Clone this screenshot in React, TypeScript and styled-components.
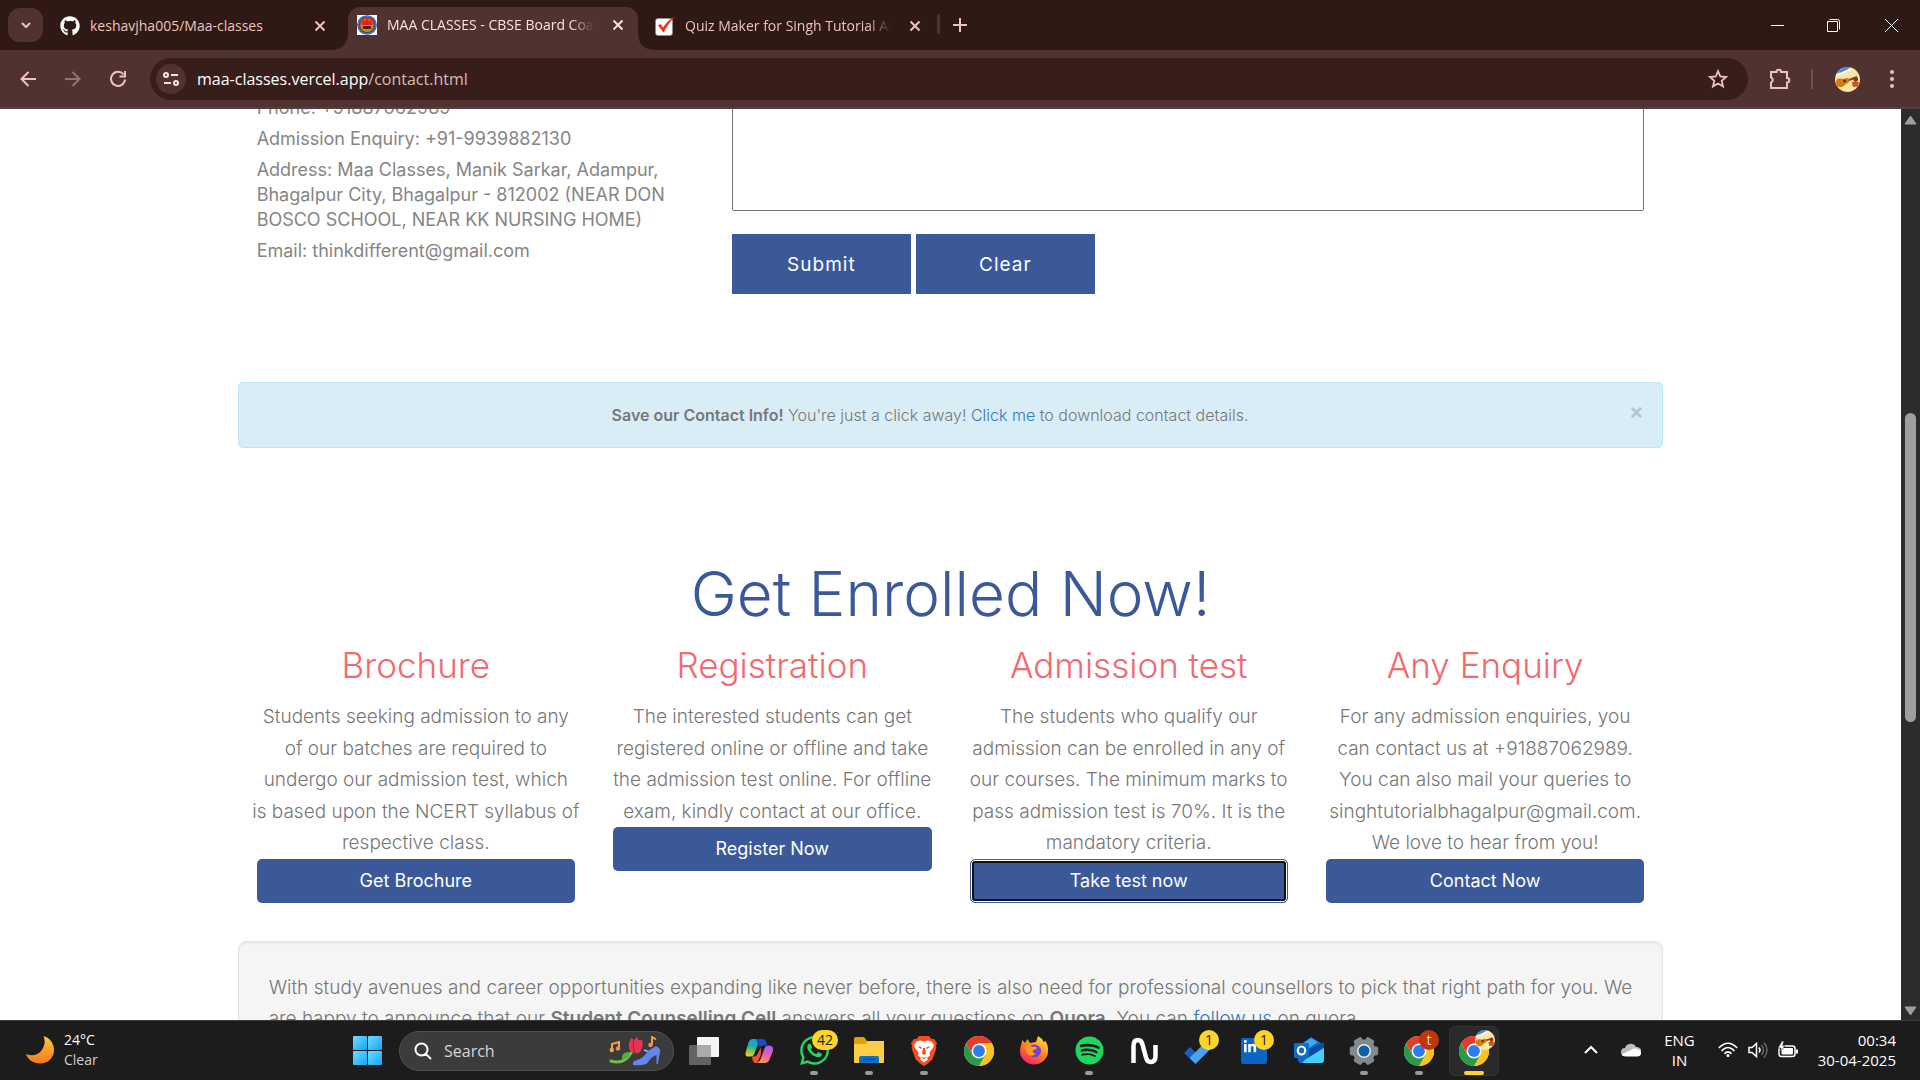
import React from "react";
import styled, { createGlobalStyle, css } from "styled-components";
import { FaGithub, FaLinkedinIn, FaWhatsapp, FaSpotify } from "react-icons/fa";

const ui = `"Open Sans", "Noto Sans", sans-serif`;
const body = `Inter, "Open Sans", sans-serif`;

const GlobalStyle = createGlobalStyle`
  *, *::before, *::after { box-sizing: border-box; }
  body { margin: 0; overflow: hidden; font-family: ${body}; }
  button, textarea, input { font: inherit; }
  button { border: 0; padding: 0; background: none; color: inherit; }
  h1, h2, p { margin: 0; }
`;

const Screen = styled.div`
  height: 100vh;
  display: flex;
  flex-direction: column;
  background: #fff;
`;

/* ---------- browser frame ---------- */

const TabStrip = styled.div`
  height: 50px;
  flex: none;
  display: flex;
  align-items: flex-end;
  background: #2f1914;
  color: #eec3be;
  font: 14px/20px ${ui};
`;

const TabSearch = styled.button`
  width: 35px;
  height: 34px;
  margin: 0 3px 8px 8px;
  border-radius: 12px;
  background: #503331;
  display: grid;
  place-items: center;
`;

const Tab = styled.div<{ $width: number; $after?: number; $active?: boolean }>`
  position: relative;
  width: ${(p) => p.$width}px;
  height: ${(p) => (p.$active ? 43 : 42)}px;
  margin-right: ${(p) => p.$after ?? 0}px;
  padding: ${(p) => (p.$active ? "0 10px 7px 9px" : "0 8px 7px 14px")};
  display: flex;
  align-items: center;
  gap: 10px;
  ${(p) =>
    p.$active &&
    css`
      background: #503331;
      color: #fbe0dc;
      border-radius: 12px 12px 0 0;
      &::before,
      &::after {
        content: "";
        position: absolute;
        bottom: 0;
        width: 14px;
        height: 14px;
      }
      &::before {
        right: 100%;
        background: radial-gradient(circle at 0 0, transparent 13px, #503331 14px);
      }
      &::after {
        left: 100%;
        background: radial-gradient(circle at 100% 0, transparent 13px, #503331 14px);
      }
    `}
`;

const TabTitle = styled.span<{ $fade?: boolean }>`
  flex: 1;
  min-width: 0;
  overflow: hidden;
  white-space: nowrap;
  ${(p) =>
    p.$fade &&
    css`
      mask-image: linear-gradient(to right, #000 calc(100% - 28px), transparent calc(100% - 4px));
    `}
`;

const IconButton = styled.button<{ $w?: number; $dim?: boolean }>`
  width: ${(p) => p.$w ?? 20}px;
  height: 24px;
  flex: none;
  display: grid;
  place-items: center;
  opacity: ${(p) => (p.$dim ? 0.45 : 1)};
`;

const StripDivider = styled.span`
  width: 3px;
  height: 20px;
  margin: 0 10px 16px 4px;
  border-radius: 2px;
  background: #503331;
`;

const NewTab = styled(IconButton)`
  margin-bottom: 13px;
`;

const WindowControls = styled.div`
  margin-left: auto;
  align-self: center;
  display: flex;
  color: #fff;
`;

const Toolbar = styled.div`
  height: 59px;
  flex: none;
  display: flex;
  align-items: center;
  padding: 0 5px;
  background: #503331;
  border-bottom: 2px solid #55403d;
  color: #eec3be;
`;

const Omnibox = styled.div`
  flex: 1;
  height: 42px;
  margin: 0 10px;
  padding: 0 20px 0 6px;
  display: flex;
  align-items: center;
  border-radius: 21px;
  background: #381e1b;
`;

const SiteInfo = styled.button`
  width: 30px;
  height: 30px;
  border-radius: 50%;
  background: #503331;
  display: grid;
  place-items: center;
  color: #fbe0dc;
`;

const Url = styled.span`
  flex: 1;
  padding-left: 11px;
  font: 16px/24px ${ui};
  color: #fff;
  span { color: #d3bcb8; }
`;

const ToolDivider = styled.span`
  width: 2px;
  height: 20px;
  margin: 0 20px 0 9px;
  background: #6f504d;
`;

const MenuButton = styled(IconButton)`
  margin-left: 8px;
`;

/* ---------- web page ---------- */

const Viewport = styled.div`
  flex: 1;
  min-height: 0;
  display: flex;
`;

const Page = styled.main`
  flex: 1;
  min-width: 0;
  overflow: hidden;
  color: #777;
  font-size: 19px;
  font-weight: 300;
`;

const Container = styled.div`
  width: 75%;
  margin: 0 auto;
`;

const ContactRow = styled.section`
  margin-top: -14px;
  display: grid;
  grid-template-columns: 1fr 2fr;
`;

const Col = styled.div`
  min-width: 0;
  padding: 0 19px;
`;

const ContactInfo = styled(Col)`
  display: flex;
  flex-direction: column;
  gap: 6px;
  font-size: 18px;
  font-weight: 400;
  line-height: 25px;
  color: #858585;
`;

const Message = styled.textarea`
  display: block;
  width: 100%;
  height: 116px;
  border: 1px solid #767676;
  border-radius: 2px;
  resize: none;
  background: #fff;
`;

const Actions = styled.div`
  margin-top: 23px;
  display: flex;
  gap: 5px;
`;

const FormButton = styled.button`
  width: 179px;
  height: 60px;
  background: #3b5998;
  color: #fff;
  font-size: 19px;
  font-weight: 400;
  letter-spacing: 1px;
`;

const Alert = styled.section`
  margin-top: 88px;
  height: 66px;
  padding: 0 14px 0 19px;
  display: flex;
  align-items: center;
  gap: 22px;
  border: 1px solid #bce8f1;
  border-radius: 5px;
  background: #d9edf7;
  font-size: 16px;
  p { flex: 1; text-align: center; }
  strong { font-weight: 600; }
`;

const AlertClose = styled.button`
  width: 24px;
  height: 24px;
  margin-bottom: 8px;
  color: #adc6d2;
  font-size: 22px;
  font-weight: 600;
  line-height: 24px;
`;

const Link = styled.a`
  color: #337ab7;
  text-decoration: none;
`;

const Title = styled.h1`
  margin-top: 113px;
  text-align: center;
  color: #3b5998;
  font: 300 62px/66px ${body};
`;

const Cards = styled.section`
  margin-top: 18px;
  display: grid;
  grid-template-columns: repeat(4, 1fr);
  align-items: start;
`;

const Card = styled(Col)`
  text-align: center;
  line-height: 1.66;
`;

const CardTitle = styled.h2`
  margin-bottom: 16px;
  color: #f16a70;
  font: 300 35px/40px ${body};
`;

const CardText = styled.p`
  margin: 0 -6px;
  white-space: pre-line;
`;

const CardLink = styled.a<{ $focused?: boolean }>`
  display: block;
  height: 44px;
  border-radius: 5px;
  background: #3b5998;
  color: #fff;
  font-size: 18px;
  font-weight: 400;
  line-height: 44px;
  text-decoration: none;
  ${(p) =>
    p.$focused &&
    css`
      border: 1px solid #3b5998;
      line-height: 42px;
      box-shadow: inset 0 0 0 1px #fff, inset 0 0 0 3px #101010;
    `}
`;

const Well = styled.section`
  margin-top: 38px;
  padding: 30px;
  border: 1px solid #e3e3e3;
  border-radius: 8px;
  background: #f5f5f5;
  box-shadow: inset 0 2px 2px rgba(0, 0, 0, 0.05);
  line-height: 1.66;
  text-align: justify;
  strong { font-weight: 600; }
`;

const ScrollBar = styled.div`
  width: 19px;
  flex: none;
  padding: 6px 0 4px;
  display: flex;
  flex-direction: column;
  align-items: center;
  background: #2c2c2c;
`;

const Track = styled.div`
  flex: 1;
  display: flex;
  flex-direction: column;
  align-items: center;
`;

const Space = styled.span<{ $grow: number }>`
  flex: ${(p) => p.$grow};
`;

const Thumb = styled.span`
  width: 11px;
  flex: 309;
  border-radius: 6px;
  background: #9f9f9f;
`;

/* ---------- taskbar ---------- */

const Taskbar = styled.footer`
  height: 60px;
  flex: none;
  display: grid;
  grid-template-columns: 353fr auto 421fr;
  align-items: center;
  border-top: 1px solid #3c3c3c;
  background: #1c1c1c;
  color: #fff;
  font: 14px/20px ${ui};
`;

const Weather = styled.div`
  padding: 0 0 2px 26px;
  display: flex;
  align-items: center;
  gap: 10px;
  p:last-child { color: #cfcfcf; }
`;

const Apps = styled.nav`
  display: flex;
  align-items: center;
  gap: 5px;
`;

const Start = styled.button`
  width: 29px;
  height: 29px;
  margin-right: 12px;
  display: grid;
  grid-template-columns: 14px 14px;
  gap: 1px;
  span { height: 14px; border-radius: 1px; background: linear-gradient(135deg, #6fdcff, #16a4fb); }
`;

const SearchBox = styled.label`
  width: 275px;
  height: 40px;
  padding: 0 12px 0 14px;
  display: flex;
  align-items: center;
  gap: 12px;
  border: 1px solid #505050;
  border-radius: 20px;
  background: #3b3b3b;
  input {
    flex: 1;
    min-width: 0;
    padding: 0;
    border: 0;
    outline: 0;
    background: none;
    color: #fff;
    font-size: 16px;
  }
  input::placeholder { color: #d6d6d6; opacity: 1; }
`;

const AppButton = styled.button<{ $active?: boolean; $running?: boolean }>`
  position: relative;
  width: 50px;
  height: 50px;
  border: 1px solid ${(p) => (p.$active ? "#333" : "transparent")};
  border-radius: 6px;
  background: ${(p) => (p.$active ? "#2a2a2a" : "none")};
  display: grid;
  place-items: center;
  &::after {
    content: "";
    display: ${(p) => (p.$active || p.$running ? "block" : "none")};
    position: absolute;
    left: 50%;
    bottom: 0;
    width: ${(p) => (p.$active ? 20 : 8)}px;
    height: 4px;
    border-radius: 2px;
    background: ${(p) => (p.$active ? "#ffd42a" : "#9a9a9a")};
    transform: translateX(-50%);
  }
`;

const Badge = styled.span<{ $wide?: boolean; $red?: boolean }>`
  position: absolute;
  top: 3px;
  right: ${(p) => (p.$wide ? 0 : 4)}px;
  min-width: 20px;
  height: 20px;
  padding: 0 ${(p) => (p.$wide ? 5 : 0)}px;
  border-radius: 10px;
  background: ${(p) => (p.$red ? "#bf360c" : "#ffd42a")};
  color: ${(p) => (p.$red ? "#f5d5c8" : "#222")};
  font: 14px/20px ${ui};
  text-align: center;
`;

const AvatarBadge = styled.span`
  position: absolute;
  top: 3px;
  right: 3px;
  display: flex;
`;

const Tray = styled.div`
  padding: 0 24px 2px 0;
  justify-self: end;
  display: flex;
  align-items: center;
  font-size: 15px;
`;

const TrayText = styled.div<{ $right?: boolean; $gap: number }>`
  margin-left: ${(p) => p.$gap}px;
  text-align: ${(p) => (p.$right ? "right" : "center")};
`;

const TrayIcon = styled.span<{ $gap: number }>`
  display: flex;
  margin-left: ${(p) => p.$gap}px;
`;

/* ---------- drawings ---------- */

const Stroke = ({ d, size = 16, w = 2, box = 16 }: { d: string; size?: number; w?: number; box?: number }) => (
  <svg width={size} height={size} viewBox={`0 0 ${box} ${box}`} fill="none" stroke="currentColor" strokeWidth={w} aria-hidden>
    <path d={d} />
  </svg>
);

const CloseIcon = () => <Stroke size={12} box={12} w={2} d="M1.5 1.5l9 9M10.5 1.5l-9 9" />;

const MaaFavicon = () => (
  <svg width="20" height="20" viewBox="0 0 20 20">
    <rect width="20" height="20" fill="#fff" />
    <circle cx="10" cy="10" r="9.8" fill="#2a4a8c" />
    <circle cx="10" cy="10" r="8.6" fill="none" stroke="#c9b5cf" strokeWidth="1" strokeDasharray="1 1" />
    <circle cx="10" cy="10" r="7" fill="#e8560f" />
    <path d="M5 7l2-2 1 2 2-4 2 4 1-2 2 2v3H5z" fill="#e91f11" />
    <path d="M4 10h12v2a6 5 0 0 1-12 0z" fill="#d38b10" />
    <path d="M6 11h8v3H6z" fill="#3c2a18" />
  </svg>
);

const QuizFavicon = () => (
  <svg width="20" height="20" viewBox="0 0 20 20">
    <rect x="0.5" y="2.5" width="17" height="17" rx="2.5" fill="#fff" stroke="#8a8a8a" strokeWidth="0.8" />
    <path d="M3 9.5l2.6-1.6 2.4 3.6C11 7 15 2.5 20 0.5 15 5.5 11.5 10.5 8.5 16.5 6.5 14 5 12 3 9.5z" fill="#ff2a12" />
  </svg>
);

const Guitar = ({ size = 25 }: { size?: number }) => (
  <svg width={size} height={size} viewBox="0 0 26 26">
    <circle cx="13" cy="13" r="13" fill="#fbe6a9" />
    <path d="M2 6.5A13 13 0 0 1 16 0.4C13 2 9 5 2 6.5z" fill="#3f86ea" />
    <path d="M1 8.5c7 0 9-4 15-6" fill="none" stroke="#fff" strokeWidth="1.5" />
    <path d="M9 15.5L23 10.5" stroke="#8a4510" strokeWidth="2.2" />
    <path d="M1 16c0-4 4-4.5 6.5-3.5 2 0.5 4-2 6.5-0.5 2 2 0 5-2 5.500-2 1-3 3.500-6 3.500s-5-2-5-5z" fill="#d17d12" />
    <circle cx="10" cy="14.5" r="1.5" fill="#5c2c06" />
    <circle cx="21.5" cy="13" r="2.5" fill="#8d3414" />
    <path d="M17.5 15.5h7.5l-1.5 5h-5z" fill="#cc5418" />
  </svg>
);

const Moon = () => (
  <svg width="28" height="28" viewBox="0 0 28 28">
    <defs>
      <linearGradient id="moon" x1="0" y1="0" x2="0" y2="1">
        <stop offset="0" stopColor="#ffc83a" />
        <stop offset="1" stopColor="#f47a1c" />
      </linearGradient>
    </defs>
    <path d="M17.5 0C24 2 28 7.5 28 14a13.5 13.5 0 0 1-14 13.5C7.5 27.5 2 24 0 18c6 2.5 12 1 15.5-3.5C19 10 19.5 4.5 17.5 0z" fill="url(#moon)" />
  </svg>
);

const Highlights = () => (
  <svg width="52" height="30" viewBox="0 0 52 30">
    <path d="M2 25q13 4 20-8" fill="none" stroke="#6cc04a" strokeWidth="3" strokeLinecap="round" />
    <path d="M13 23q-1-7 7-7q1 7-7 7z" fill="#4fae3a" />
    <path d="M20 7l2-5 3 2 3-3 1.5 3 4 0.5q1 11-5 13-10 0-8.5-10.5z" fill="#e8344f" />
    <path d="M25 4q-2 6 1 13" fill="none" stroke="#b91c3c" strokeWidth="1.2" />
    <path d="M3 14V8l7-2v7" fill="none" stroke="#f4a04a" strokeWidth="2" />
    <circle cx="2.8" cy="14" r="2.2" fill="#f4a04a" />
    <circle cx="9" cy="12.5" r="2.2" fill="#f08a5a" />
    <path d="M43 9V1l4 2.5" fill="none" stroke="#f4a04a" strokeWidth="2" />
    <circle cx="41.5" cy="9" r="2.2" fill="#f08a5a" />
    <path d="M35 14q8 2 6 8" fill="none" stroke="#8fa6f5" strokeWidth="2.2" />
    <path d="M24 29q-1-4 4-5 7-2 11-9l8-5q5 2 4 7-1 3-2 11h-1.5l0-9q-6 2-9 8-4 3-14.5 2z" fill="#6486ea" />
  </svg>
);

const TaskView = () => (
  <svg width="30" height="28" viewBox="0 0 30 28">
    <rect x="0" y="8" width="22" height="20" rx="1" fill="#626262" />
    <rect x="8" y="0" width="22" height="20" rx="1" fill="#f4f4f4" />
    <path d="M8 8h14v12H8z" fill="#aaa" />
  </svg>
);

const Copilot = () => (
  <svg width="28" height="26" viewBox="0 0 30 28">
    <defs>
      <linearGradient id="cp1" x1="0.6" y1="0" x2="0.3" y2="1">
        <stop offset="0" stopColor="#1a9bf0" />
        <stop offset="0.45" stopColor="#18b39a" />
        <stop offset="1" stopColor="#f2cf1b" />
      </linearGradient>
      <linearGradient id="cp2" x1="0.7" y1="0" x2="0.3" y2="1">
        <stop offset="0" stopColor="#a15cf5" />
        <stop offset="0.5" stopColor="#ec5fa5" />
        <stop offset="1" stopColor="#fb9a4c" />
      </linearGradient>
    </defs>
    <path d="M8 1h12l-3 1q-2 1-3 4l-4 11q-1 3-4 3H4q-5 0-3-6L4 4q1-3 4-3z" fill="url(#cp1)" />
    <path d="M13 1h6q3 0 4 4l1 3h-5q-2 0-3 2l-3-5q0-3-2-4z" fill="#1d49c4" />
    <path d="M22 27H11l3-1q2-1 3-4l4-11q1-3 4-3h1q5 0 4 6l-4 10q-1 3-4 3z" fill="url(#cp2)" />
    <path d="M7 20h3q2 0 3-2l4-8v8l-3 7q-1 2-3 2-2 0-3-4z" fill="#f4513b" />
  </svg>
);

const Folder = () => (
  <svg width="30" height="27" viewBox="0 0 30 27">
    <path d="M0 2q0-2 2-2h8l3 4h15q2 0 2 2v6H0z" fill="#dfa00a" />
    <path d="M0 7h11l3-3h16v21q0 1-1 1H1q-1 0-1-1z" fill="#ffcc45" />
    <path d="M5 26v-5q0-2 2-2h16q2 0 2 2v5z" fill="#0d72c4" />
    <path d="M9 22.5h12" stroke="#064b8c" strokeWidth="1.5" />
  </svg>
);

const BraveIcon = () => (
  <svg width="26" height="30" viewBox="0 0 26 30">
    <path d="M8 0h10l2.5 3H23l3 4-1 3 0.5 2-4 11-4.5 4.5-4 2.5-4-2.5L4.5 23l-4-11L1 10 0 7l3-4h2.5z" fill="#fb4a1e" />
    <path d="M9 4.5l4 1 4-1 3.5 1L23 9l-1 3-3.5 4.5 0.5 3-3 2.5 1 1.5-4 3-4-3 1-1.500-3-2.500 0.500-3L4 12 3 9l2.500-3.500z" fill="#fff" />
    <path d="M6 10l5 1.5L10 13zM20 10l-5 1.5 1 1.5zM12 12h2l1 5.5-2 1.5-2-1.5zM9.5 20.5l3.5 1.5 3.5-1.5-3.5 3z" fill="#fb4a1e" />
  </svg>
);

const ChromeIcon = () => (
  <svg width="30" height="30" viewBox="0 0 48 48">
    <circle cx="24" cy="24" r="24" fill="#fff" />
    <path d="M24 12h20.8A24 24 0 0 0 3.2 12l10.4 18z" fill="#e33b2e" />
    <path d="M34.4 30L24 48A24 24 0 0 0 44.8 12H24z" fill="#fcc31e" />
    <path d="M13.6 30L3.2 12A24 24 0 0 0 24 48l10.4-18z" fill="#2a9a48" />
    <circle cx="24" cy="24" r="12" fill="#fff" />
    <circle cx="24" cy="24" r="9.5" fill="#2f7bee" />
  </svg>
);

const Firefox = () => (
  <svg width="28" height="29" viewBox="0 0 28 29">
    <defs>
      <linearGradient id="ff" x1="0.8" y1="0" x2="0.2" y2="1">
        <stop offset="0" stopColor="#ffe03a" />
        <stop offset="0.45" stopColor="#ff8a1e" />
        <stop offset="1" stopColor="#f5156c" />
      </linearGradient>
    </defs>
    <path d="M1 9l1.5-5 2.5 3 2.5-4 2.5 4 6-1 2-6q4 2 5.5 6l2-1q3 5 2.5 10a14 13.5 0 0 1-28 0q0-3 1-6z" fill="url(#ff)" />
    <circle cx="14.5" cy="15" r="6.5" fill="#7a3fe0" />
    <path d="M5 11q4-3 7 0 4-1 5 1-1 2-4 2-1 3 3 4-6 4-9-1z" fill="#ff9a22" />
  </svg>
);

const Wave = () => (
  <svg width="27" height="28" viewBox="0 0 27 28" fill="none" stroke="#fff" strokeWidth="4.5">
    <path d="M2.5 26V9q0-6 4.5-6 3.5 0 4.5 4.5l3.5 13q1.2 4.5 4.5 4.5 5 0 5-6V8" />
  </svg>
);

const Todo = () => (
  <svg width="30" height="26" viewBox="0 0 30 26">
    <path d="M0 15l6-6 11 10.5-6 6z" fill="#1a5dbd" />
    <path d="M5.5 20L24 1.5l6 6L11.5 26z" fill="#45a5f0" />
  </svg>
);

const LinkedIn = () => (
  <svg width="26" height="26" viewBox="0 0 26 26">
    <rect width="26" height="26" rx="2" fill="#0a66c2" />
    <FaLinkedinIn x={2} y={2} width={22} height={22} color="#fff" />
  </svg>
);

const Outlook = () => (
  <svg width="30" height="27" viewBox="0 0 30 27">
    <path d="M4 9L17 0l13 8v15q0 3-3 3H7q-3 0-3-3z" fill="#1266c4" />
    <path d="M7 8l10-7 7 4-12 8z" fill="#3aaaf2" />
    <path d="M12 14L30 5v5L16 20z" fill="#0a4ba8" />
    <path d="M12 22l18-11v12q0 3-3 3H8z" fill="#43d0f7" />
    <rect x="0" y="6" width="15" height="15" rx="1.5" fill="#0f6cc9" />
    <ellipse cx="7.5" cy="13.5" rx="3.7" ry="4" fill="none" stroke="#fff" strokeWidth="2.2" />
  </svg>
);

const Gear = () => (
  <svg width="30" height="30" viewBox="0 0 30 30">
    {[30, 90, 150].map((a) => (
      <rect key={a} x="10.5" y="0.8" width="9" height="28.4" rx="2" fill="#808890" transform={`rotate(${a} 15 15)`} />
    ))}
    <circle cx="15" cy="15" r="11.5" fill="#808890" />
    <circle cx="15" cy="15" r="7" fill="#e9eef2" />
    <circle cx="15" cy="15" r="5.5" fill="#0f5ea8" />
  </svg>
);

const Cloud = () => (
  <svg width="20" height="14" viewBox="0 0 20 14">
    <path d="M4 13a4 4 0 0 1 0-8 6 6 0 0 1 11-1 5 4.5 0 0 1 1 9z" fill="#bdbdbd" />
    <path d="M4.5 13.5q-3 0-4-2L11 6.5q3-2 6 0 3 1 3 3.5 0 3.5-4 3.5z" fill="#fff" />
  </svg>
);

const Wifi = () => (
  <svg width="20" height="16" viewBox="0 0 20 16" fill="none" stroke="#fff" strokeWidth="1.6">
    <path d="M0.8 6Q10-3.5 19.2 6M3.6 9Q10 2 16.4 9M6.4 11.7Q10 8 13.6 11.7" />
    <circle cx="10" cy="13.5" r="1.5" fill="#fff" stroke="none" />
  </svg>
);

const Sound = () => (
  <svg width="20" height="18" viewBox="0 0 20 18" fill="none" stroke="#fff" strokeWidth="1.5">
    <path d="M1 6.5v5h3l4.5 4V2.5L4 6.5zM11 6.5q2 2.5 0 5" />
    <path d="M13.5 4q4 5 0 10M16 1.5q6 7.5 0 15" stroke="#666" />
  </svg>
);

const Battery = () => (
  <svg width="20" height="17" viewBox="0 0 20 17">
    <rect x="1" y="5" width="16" height="10.5" rx="2.5" fill="none" stroke="#fff" strokeWidth="1.5" />
    <rect x="3.5" y="7" width="11.5" height="6.5" rx="1" fill="#fff" />
    <path d="M18 8.5h2v4h-2z" fill="#fff" />
    <path d="M4 0L0 7h3l-1 4 5-6H4.5L6 0z" fill="#fff" stroke="#1c1c1c" strokeWidth="0.6" />
  </svg>
);

/* ---------- content ---------- */

const cards = [
  {
    title: "Brochure",
    text: "Students seeking admission to any\nof our batches are required to\nundergo our admission test, which\nis based upon the NCERT syllabus of\nrespective class.",
    action: "Get Brochure",
  },
  {
    title: "Registration",
    text: "The interested students can get\nregistered online or offline and take\nthe admission test online. For offline\nexam, kindly contact at our office.",
    action: "Register Now",
  },
  {
    title: "Admission test",
    text: "The students who qualify our\nadmission can be enrolled in any of\nour courses. The minimum marks to\npass admission test is 70%. It is the\nmandatory criteria.",
    action: "Take test now",
    focused: true,
  },
  {
    title: "Any Enquiry",
    text: "For any admission enquiries, you\ncan contact us at +91887062989.\nYou can also mail your queries to\nsinghtutorialbhagalpur@gmail.com.\nWe love to hear from you!",
    action: "Contact Now",
  },
];

const BrowserFrame = () => (
  <>
    <TabStrip>
      <TabSearch aria-label="Search tabs">
        <Stroke size={12} box={12} d="M2 4l4 4 4-4" />
      </TabSearch>
      <Tab $width={292} $after={10}>
        <FaGithub size={20} color="#fff" />
        <TabTitle>keshavjha005/Maa-classes</TabTitle>
        <IconButton aria-label="Close tab"><CloseIcon /></IconButton>
      </Tab>
      <Tab $active $width={290} $after={3}>
        <MaaFavicon />
        <TabTitle $fade>MAA CLASSES - CBSE Board Coaching</TabTitle>
        <IconButton aria-label="Close tab"><CloseIcon /></IconButton>
      </Tab>
      <Tab $width={292}>
        <QuizFavicon />
        <TabTitle $fade>Quiz Maker for Singh Tutorial Academy</TabTitle>
        <IconButton aria-label="Close tab"><CloseIcon /></IconButton>
      </Tab>
      <StripDivider />
      <NewTab aria-label="New tab"><Stroke size={14} box={14} d="M7 0v14M0 7h14" /></NewTab>
      <WindowControls>
        <IconButton $w={56} aria-label="Minimize"><Stroke size={13} box={13} w={1} d="M0 6.5h13" /></IconButton>
        <IconButton $w={57} aria-label="Restore"><Stroke size={13} box={13} w={1} d="M0.5 2.5h10v10h-10zM2.5 0.5h8q2 0 2 2v8" /></IconButton>
        <IconButton $w={58} aria-label="Close"><Stroke size={13} box={13} w={1} d="M0 0l13 13M13 0L0 13" /></IconButton>
      </WindowControls>
    </TabStrip>
    <Toolbar>
      <IconButton $w={45} aria-label="Back"><Stroke d="M16 8H2M8.5 1L1.5 8l7 7" /></IconButton>
      <IconButton $w={45} $dim aria-label="Forward"><Stroke d="M0 8h14M7.5 1l7 7-7 7" /></IconButton>
      <IconButton $w={45} aria-label="Reload"><Stroke size={18} box={18} d="M14.5 4.5A7 7 0 1 0 16 9.5M16 1v5.5h-5.5" /></IconButton>
      <Omnibox>
        <SiteInfo aria-label="Site information">
          <Stroke d="M1 4a2 2 0 1 0 4 0a2 2 0 1 0-4 0M8 4h7M11 12a2 2 0 1 0 4 0a2 2 0 1 0-4 0M1 12h7" />
        </SiteInfo>
        <Url>maa-classes.vercel.app<span>/contact.html</span></Url>
        <IconButton aria-label="Bookmark this tab">
          <Stroke size={20} box={20} w={1.8} d="M10 2.2l2.3 5.3 5.7.5-4.3 3.8 1.3 5.7-5-3-5 3 1.3-5.7L2 8l5.7-.5z" />
        </IconButton>
      </Omnibox>
      <IconButton $w={44} aria-label="Extensions">
        <Stroke size={22} box={22} d="M2 4h5.5a2.3 2.3 0 0 1 4.6 0H18v6a2.3 2.3 0 0 1 0 4.6V20H2v-5.4a2.8 2.8 0 0 0 0-5.2z" />
      </IconButton>
      <ToolDivider />
      <IconButton $w={28} aria-label="Profile"><Guitar /></IconButton>
      <MenuButton $w={46} aria-label="Menu">
        <svg width="4" height="18" viewBox="0 0 4 18" fill="currentColor">
          <circle cx="2" cy="2" r="2" /><circle cx="2" cy="9" r="2" /><circle cx="2" cy="16" r="2" />
        </svg>
      </MenuButton>
    </Toolbar>
  </>
);

const WebPage = () => (
  <Page>
    <Container>
      <ContactRow>
        <ContactInfo>
          <p>Phone: +91887062989</p>
          <p>Admission Enquiry: +91-9939882130</p>
          <p>Address: Maa Classes, Manik Sarkar, Adampur, Bhagalpur City, Bhagalpur - 812002 (NEAR DON BOSCO SCHOOL, NEAR KK NURSING HOME)</p>
          <p>Email: thinkdifferent@gmail.com</p>
        </ContactInfo>
        <Col>
          <Message aria-label="Message" />
          <Actions>
            <FormButton type="submit">Submit</FormButton>
            <FormButton type="reset">Clear</FormButton>
          </Actions>
        </Col>
      </ContactRow>
      <Alert>
        <p><strong>Save our Contact Info!</strong> You're just a click away! <Link href="#contact">Click me</Link> to download contact details.</p>
        <AlertClose aria-label="Dismiss">×</AlertClose>
      </Alert>
      <Title>Get Enrolled Now!</Title>
      <Cards>
        {cards.map((c) => (
          <Card key={c.title}>
            <CardTitle>{c.title}</CardTitle>
            <CardText>{c.text}</CardText>
            <CardLink href="#enroll" $focused={c.focused}>{c.action}</CardLink>
          </Card>
        ))}
      </Cards>
      <Well>
        With study avenues and career opportunities expanding like never before, there is also need for professional counsellors to pick that right path for you. We are happy to announce that our <strong>Student Counselling Cell</strong> answers all your questions on <strong>Quora</strong>. You can <Link href="#quora">follow us</Link> on quora.
      </Well>
    </Container>
  </Page>
);

const WindowsTaskbar = () => (
  <Taskbar>
    <Weather>
      <Moon />
      <div><p>24°C</p><p>Clear</p></div>
    </Weather>
    <Apps>
      <Start aria-label="Start"><span /><span /><span /><span /></Start>
      <SearchBox>
        <Stroke size={18} box={18} d="M1.5 7.5a6 6 0 1 0 12 0a6 6 0 1 0-12 0M12 12l5 5" />
        <input type="text" placeholder="Search" aria-label="Search" />
        <Highlights />
      </SearchBox>
      <AppButton aria-label="Task view"><TaskView /></AppButton>
      <AppButton aria-label="Copilot"><Copilot /></AppButton>
      <AppButton $running aria-label="WhatsApp"><FaWhatsapp size={33} color="#25d366" /><Badge $wide>42</Badge></AppButton>
      <AppButton $running aria-label="File Explorer"><Folder /></AppButton>
      <AppButton $running aria-label="Brave"><BraveIcon /></AppButton>
      <AppButton aria-label="Chrome"><ChromeIcon /></AppButton>
      <AppButton aria-label="Firefox"><Firefox /></AppButton>
      <AppButton $running aria-label="Spotify"><FaSpotify size={29} color="#1ed760" /></AppButton>
      <AppButton aria-label="Wave"><Wave /></AppButton>
      <AppButton aria-label="To Do"><Todo /><Badge>1</Badge></AppButton>
      <AppButton aria-label="LinkedIn"><LinkedIn /><Badge>1</Badge></AppButton>
      <AppButton aria-label="Outlook"><Outlook /></AppButton>
      <AppButton $running aria-label="Settings"><Gear /></AppButton>
      <AppButton $running aria-label="Chrome, second profile"><ChromeIcon /><Badge $red>t</Badge></AppButton>
      <AppButton $active aria-label="Chrome, current profile"><ChromeIcon /><AvatarBadge><Guitar size={20} /></AvatarBadge></AppButton>
    </Apps>
    <Tray>
      <TrayIcon $gap={0}><Stroke size={14} box={14} d="M1 10l6-6 6 6" /></TrayIcon>
      <TrayIcon $gap={23}><Cloud /></TrayIcon>
      <TrayText $gap={23}><div>ENG</div><div>IN</div></TrayText>
      <TrayIcon $gap={23}><Wifi /></TrayIcon>
      <TrayIcon $gap={10}><Sound /></TrayIcon>
      <TrayIcon $gap={10}><Battery /></TrayIcon>
      <TrayText $gap={20} $right><div>00:34</div><div>30-04-2025</div></TrayText>
    </Tray>
  </Taskbar>
);

export default function App() {
  return (
    <Screen>
      <GlobalStyle />
      <BrowserFrame />
      <Viewport>
        <WebPage />
        <ScrollBar>
          <svg width="13" height="10" viewBox="0 0 13 10"><path d="M6.5 1L12 9H1z" fill="#9f9f9f" stroke="#9f9f9f" strokeLinejoin="round" /></svg>
          <Track><Space $grow={288} /><Thumb /><Space $grow={284} /></Track>
          <svg width="13" height="10" viewBox="0 0 13 10"><path d="M6.5 9L12 1H1z" fill="#9f9f9f" stroke="#9f9f9f" strokeLinejoin="round" /></svg>
        </ScrollBar>
      </Viewport>
      <WindowsTaskbar />
    </Screen>
  );
}
